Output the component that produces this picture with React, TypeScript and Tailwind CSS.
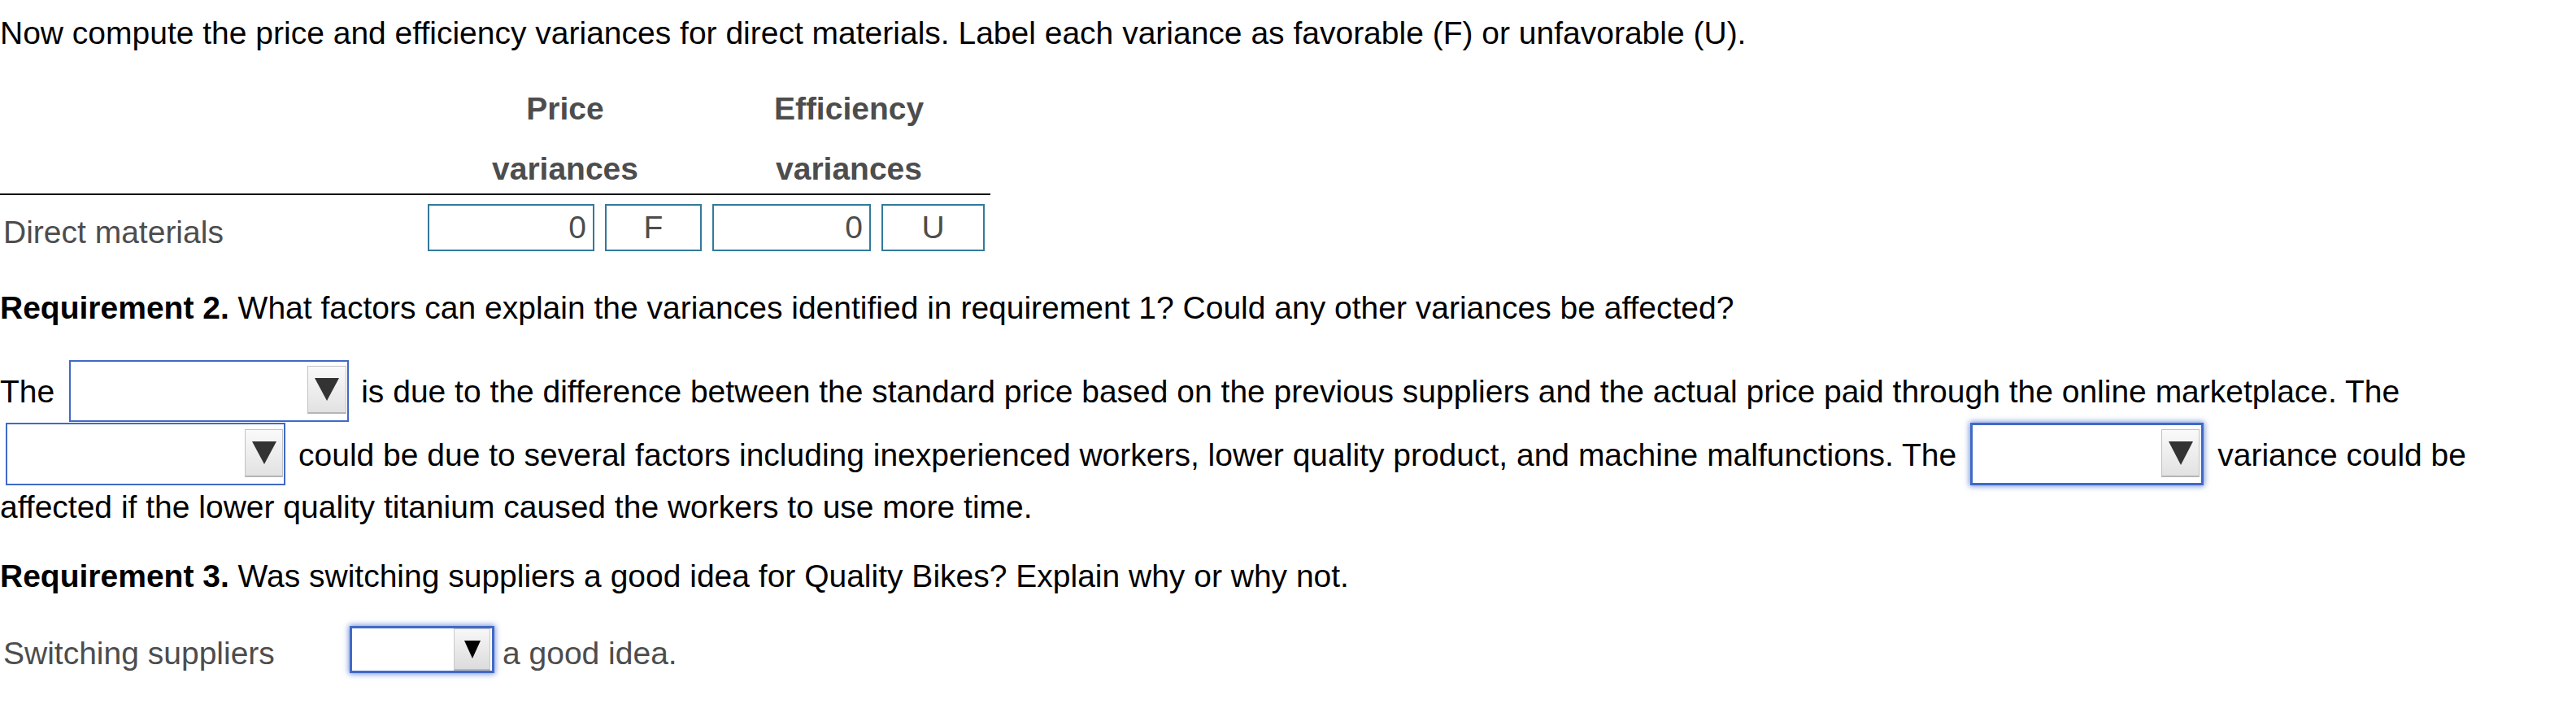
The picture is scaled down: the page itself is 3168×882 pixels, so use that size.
import React from "react";

function Tri({ w, h, color }: { w: number; h: number; color: string }) {
  return (
    <svg width={w} height={h} viewBox={`0 0 ${w} ${h}`}>
      <polygon points={`0,0 ${w},0 ${w / 2},${h}`} fill={color} />
    </svg>
  );
}

export default function App() {
  return (
    <div className="min-h-screen w-full bg-white font-['Liberation_Sans',Arial,sans-serif] text-[39px] leading-[44px] text-black">
      <div className="pt-[19px] whitespace-nowrap">
        Now compute the price and efficiency variances for direct materials. Label each variance as favorable (F) or unfavorable (U).
      </div>

      {/* Table */}
      <div className="mt-[29px] w-[1218px]">
        <div className="flex h-[73px] items-end pb-[9px] font-bold text-[#4d4d4d]">
          <div className="w-[520px]" />
          <div className="w-[350px] text-center">Price</div>
          <div className="w-[348px] text-center">Efficiency</div>
        </div>
        <div className="flex h-[75px] items-end border-b-2 border-black pb-[8px] font-bold text-[#4d4d4d]">
          <div className="w-[520px]" />
          <div className="w-[350px] text-center">variances</div>
          <div className="w-[348px] text-center">variances</div>
        </div>
        <div className="flex items-center pt-[11px] text-[#4d4d4d]">
          <div className="w-[520px] pl-[4px] pt-[11px]">Direct materials</div>
          <div className="flex w-[350px] gap-[13px] pl-[6px]">
            <div className="flex h-[58px] w-[205px] items-center justify-end border-2 border-[#33799c] pr-[8px]">0</div>
            <div className="flex h-[58px] w-[119px] items-center justify-center border-2 border-[#33799c]">F</div>
          </div>
          <div className="flex w-[348px] gap-[13px] pl-[6px]">
            <div className="flex h-[58px] w-[195px] items-center justify-end border-2 border-[#33799c] pr-[8px]">0</div>
            <div className="flex h-[58px] w-[127px] items-center justify-center border-2 border-[#33799c]">U</div>
          </div>
        </div>
      </div>

      {/* Requirement 2 */}
      <div className="mt-[48px] whitespace-nowrap">
        <span className="font-bold">Requirement 2.</span> What factors can explain the variances identified in requirement 1? Could any other variances be affected?
      </div>

      <div className="mt-[42px]">
        <div className="flex h-[77px] items-center whitespace-nowrap">
          <span>The</span>
          <div className="ml-[18px] mr-[15px] flex h-[76px] w-[344px] shrink-0 items-start justify-end self-start border-2 border-[#4169c6] bg-white pr-[1px] pt-[5px]">
            <div className="flex h-[59px] w-[48px] items-center justify-center border border-[#c2c2c2] border-b-2 border-b-[#b5b5b5] bg-gradient-to-b from-[#fafafa] to-[#e2e2e2]">
              <Tri w={30} h={28} color="#333333" />
            </div>
          </div>
          <span>is due to the difference between the standard price based on the previous suppliers and the actual price paid through the online marketplace. The</span>
        </div>
        <div className="flex h-[77px] items-center whitespace-nowrap">
          <div className="ml-[7px] mr-[16px] flex h-[77px] w-[344px] shrink-0 items-start justify-end border-2 border-[#4169c6] bg-white pr-[1px] pt-[6px]">
            <div className="flex h-[59px] w-[47px] items-center justify-center border border-[#c2c2c2] border-b-2 border-b-[#b5b5b5] bg-gradient-to-b from-[#fafafa] to-[#e2e2e2]">
              <Tri w={30} h={28} color="#333333" />
            </div>
          </div>
          <span className="pt-[2px]">could be due to several factors including inexperienced workers, lower quality product, and machine malfunctions. The</span>
          <div className="ml-[17px] mr-[17px] flex h-[77px] w-[287px] shrink-0 items-start justify-end border-[3px] border-[#4169c6] bg-white pr-[2px] pt-[5px] shadow-[0_0_7px_1px_rgba(65,105,198,0.75)]">
            <div className="flex h-[59px] w-[47px] items-center justify-center border border-[#c2c2c2] border-b-2 border-b-[#b5b5b5] bg-gradient-to-b from-[#fafafa] to-[#e2e2e2]">
              <Tri w={30} h={29} color="#333333" />
            </div>
          </div>
          <span className="pt-[2px]">variance could be</span>
        </div>
        <div className="mt-[5px] whitespace-nowrap">
          affected if the lower quality titanium caused the workers to use more time.
        </div>
      </div>

      {/* Requirement 3 */}
      <div className="mt-[41px] whitespace-nowrap">
        <span className="font-bold">Requirement 3.</span> Was switching suppliers a good idea for Quality Bikes? Explain why or why not.
      </div>

      <div className="mt-[39px] flex items-center whitespace-nowrap text-[#4d4d4d]">
        <div className="w-[430px] pl-[4px] pt-[9px]">Switching suppliers</div>
        <div className="flex h-[58px] w-[178px] shrink-0 items-stretch justify-end border-[3px] border-[#4169c6] bg-white pr-[2px] shadow-[0_0_7px_1px_rgba(65,105,198,0.75)]">
          <div className="flex w-[45px] items-center justify-center border border-[#c8c8c8] border-b-2 border-b-[#b8b8b8] bg-gradient-to-b from-[#f7f7f7] to-[#dcdcdc]">
            <Tri w={20} h={22} color="#000000" />
          </div>
        </div>
        <span className="ml-[10px] pt-[9px]">a good idea.</span>
      </div>
    </div>
  );
}
